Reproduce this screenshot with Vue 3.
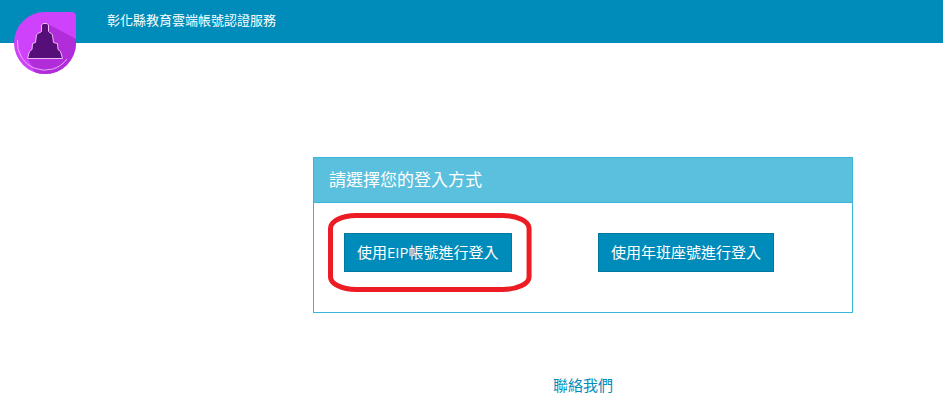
<script setup>
const loginMethods = [
  { id: 'eip', label: '使用EIP帳號進行登入', marked: true },
  { id: 'seat', label: '使用年班座號進行登入', marked: false },
]
</script>

<template>
  <div class="page">
    <header class="topbar">
      <a class="brand" href="#" aria-label="首頁">
        <svg class="logo" width="62" height="62" viewBox="0 0 62 62" aria-hidden="true">
          <defs>
            <clipPath id="badge">
              <path d="M31 0H57Q62 0 62 5V31A31 31 0 1 1 31 0Z" />
            </clipPath>
          </defs>
          <g clip-path="url(#badge)">
            <rect width="62" height="62" fill="#cf42fb" />
            <path d="M34 12L62 27V62H22L14 47Z" fill="#b02dd9" />
          </g>
          <path d="M3.5 28A27.5 27.5 0 0 0 53 47" fill="none" stroke="#eca8fb" stroke-width="1" />
          <path
            d="M29 11.5L27.500 13V19.500L26 20.500L23.500 21.500L22.500 23L21.500 30.500L18.500 31.500L18 37.500L15.500 39.500L14.500 43L13.500 46.500H48.500L47.500 43L46.500 39.500L44 37.500L43.500 31.500L39.500 30.500L38.500 23L37.500 21.500L35.500 20.500L34.500 19.500V13L33 11.500Z"
            fill="#560f78"
            stroke="#efb7f8"
            stroke-width="1"
            stroke-linejoin="round"
          />
        </svg>
      </a>
      <span class="site-name">彰化縣教育雲端帳號認證服務</span>
    </header>

    <main class="content">
      <section class="panel">
        <h1 class="panel-heading">請選擇您的登入方式</h1>
        <div class="panel-body">
          <div v-for="method in loginMethods" :key="method.id" class="option">
            <div class="target">
              <button type="button" class="login-button">{{ method.label }}</button>
              <svg
                v-if="method.marked"
                class="marker"
                viewBox="0 0 204 79"
                preserveAspectRatio="none"
                aria-hidden="true"
              >
                <path
                  d="M28 2.500H175A26.500 13 0 0 1 201.500 15.500V64A26.500 12.500 0 0 1 175 76.500H28A25.500 12.500 0 0 1 2.500 64V15.500A25.500 13 0 0 1 28 2.500Z"
                  fill="none"
                  stroke="#ed1c24"
                  stroke-width="5"
                />
              </svg>
            </div>
          </div>
        </div>
      </section>
      <a class="contact" href="#">聯絡我們</a>
    </main>
  </div>
</template>

<style>
body {
  margin: 0;
  background: #fff;
}
</style>

<style scoped>
.page {
  font-family: "Open Sans", "Noto Sans CJK TC", sans-serif;
}

.topbar {
  display: flex;
  align-items: center;
  height: 43px;
  padding: 0 14px;
  box-sizing: border-box;
  gap: 31px;
  background: #008cba;
}

.brand {
  align-self: flex-start;
  margin-top: 12px;
  height: 62px;
}

.logo {
  display: block;
}

.site-name {
  padding-bottom: 3px;
  font-size: 13px;
  line-height: 20px;
  color: #fff;
}

.content {
  display: flex;
  flex-direction: column;
  align-items: center;
  padding: 114px 0 0 223px;
}

.panel {
  width: 75%;
  box-sizing: border-box;
  border: 1px solid #3db5d8;
}

.panel-heading {
  margin: 0;
  padding: 10px 15px;
  border-bottom: 1px solid #3db5d8;
  background: #5bc0de;
  color: #fff;
  font-size: 17px;
  font-weight: 400;
  line-height: 24px;
}

.panel-body {
  display: grid;
  grid-template-columns: 1fr 1fr;
  padding: 30px 15px 40px;
}

.option {
  padding: 0 15px;
}

.target {
  position: relative;
  width: fit-content;
}

.login-button {
  display: block;
  padding: 8px 12px;
  border: 1px solid #0079a1;
  border-radius: 0;
  background: #008cba;
  color: #fff;
  font-family: inherit;
  font-size: 15px;
  line-height: 21px;
  white-space: nowrap;
  cursor: pointer;
}

.marker {
  position: absolute;
  top: -20px;
  left: -16px;
  width: calc(100% + 36px);
  height: calc(100% + 40px);
  pointer-events: none;
}

.contact {
  margin-top: 62px;
  color: #008cba;
  font-size: 15px;
  line-height: 21px;
  text-decoration: none;
}
</style>
